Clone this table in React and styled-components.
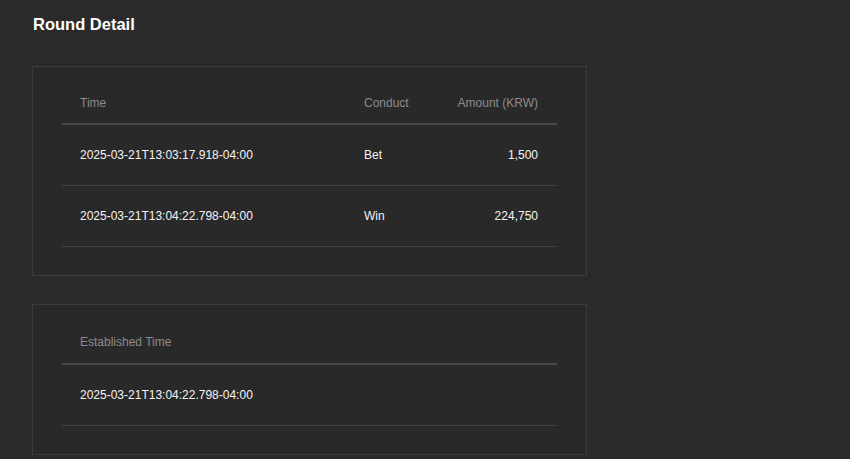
import React from "react";
import styled, { createGlobalStyle } from "styled-components";

const Global = createGlobalStyle`
  html, body { margin: 0; padding: 0; background: #2b2a2b; }
  body { font-family: "Liberation Sans", Arial, sans-serif; }
`;

const Page = styled.div`
  padding: 15px 32px 0 32px;
  width: 555px;
  display: flex;
  flex-direction: column;
`;

const Title = styled.h2`
  margin: 0 0 33px 1px;
  font-size: 16.5px;
  line-height: 18px;
  font-weight: 700;
  color: #ffffff;
`;

const Card = styled.section`
  border: 1px solid #3c3b3d;
  background: #2a292a;
  padding: 15px 29px 28px 29px;
  margin-bottom: ${(p) => p.$mb || 0}px;
`;

const Row = styled.div`
  display: grid;
  grid-template-columns: ${(p) => p.$cols};
  align-items: center;
  height: ${(p) => p.$h}px;
  border-bottom: ${(p) => (p.$head ? "2px solid #4a494b" : "1px solid #424143")};
  box-sizing: border-box;
`;

const Cell = styled.div`
  padding: 0 ${(p) => (p.$right ? 19 : 18)}px 0 18px;
  font-size: 12px;
  color: ${(p) => (p.$head ? "#8c8b8d" : "#f4f4f4")};
  font-weight: 400;
  text-align: ${(p) => (p.$right ? "right" : "left")};
  white-space: nowrap;
`;

const COLS = "284px 88px 1fr";

const rows = [
  { time: "2025-03-21T13:03:17.918-04:00", conduct: "Bet", amount: "1,500" },
  { time: "2025-03-21T13:04:22.798-04:00", conduct: "Win", amount: "224,750" },
];

export default function App() {
  return (
    <>
      <Global />
      <Page>
        <Title>Round Detail</Title>
        <Card $mb={28}>
          <Row $cols={COLS} $h={43} $head>
            <Cell $head>Time</Cell>
            <Cell $head>Conduct</Cell>
            <Cell $head $right>Amount (KRW)</Cell>
          </Row>
          {rows.map((r) => (
            <Row key={r.time} $cols={COLS} $h={61}>
              <Cell>{r.time}</Cell>
              <Cell>{r.conduct}</Cell>
              <Cell $right>{r.amount}</Cell>
            </Row>
          ))}
        </Card>
        <Card>
          <Row $cols="1fr" $h={45} $head>
            <Cell $head>Established Time</Cell>
          </Row>
          <Row $cols="1fr" $h={61}>
            <Cell>2025-03-21T13:04:22.798-04:00</Cell>
          </Row>
        </Card>
      </Page>
    </>
  );
}
